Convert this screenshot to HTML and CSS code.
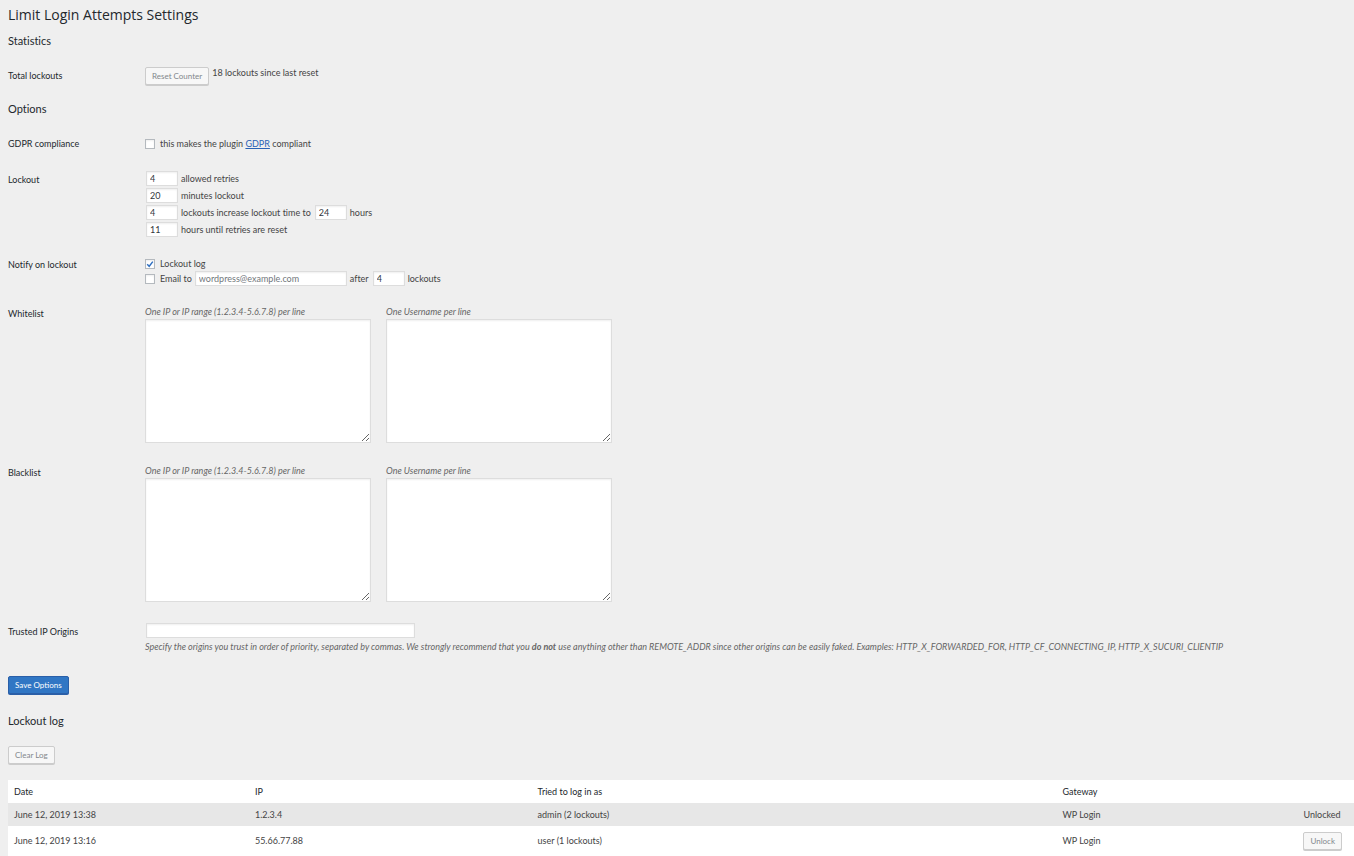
FILE: index.html
```html
<!DOCTYPE html>
<html lang="en">

<head>
    <meta charset="UTF-8">
    <meta name="viewport" content="width=device-width, initial-scale=1.0">
    <title>Limit Login Attempts Settings</title>
    <link rel="stylesheet" href="styles.css">
</head>

<body>
    <div class="wrap">
        <h1>Limit Login Attempts Settings</h1>
        <form>
            <h2>Statistics</h2>
            <div class="row">
                <div class="label">Total lockouts</div>
                <div class="field counter">
                    <button type="button" class="button">Reset Counter</button>
                    <span>18 lockouts since last reset</span>
                </div>
            </div>

            <h2>Options</h2>
            <div class="row">
                <div class="label">GDPR compliance</div>
                <div class="field line">
                    <input type="checkbox" id="gdpr">
                    <label for="gdpr">this makes the plugin <a href="#">GDPR</a> compliant</label>
                </div>
            </div>
            <div class="row">
                <div class="label">Lockout</div>
                <div class="field lines">
                    <div class="line">
                        <input type="text" class="num" id="retries" value="4">
                        <label for="retries">allowed retries</label>
                    </div>
                    <div class="line">
                        <input type="text" class="num" id="minutes" value="20">
                        <label for="minutes">minutes lockout</label>
                    </div>
                    <div class="line">
                        <input type="text" class="num" id="increase" value="4">
                        <label for="increase">lockouts increase lockout time to</label>
                        <input type="text" class="num" id="long" value="24">
                        <label for="long">hours</label>
                    </div>
                    <div class="line">
                        <input type="text" class="num" id="reset" value="11">
                        <label for="reset">hours until retries are reset</label>
                    </div>
                </div>
            </div>
            <div class="row">
                <div class="label">Notify on lockout</div>
                <div class="field">
                    <div class="line">
                        <input type="checkbox" id="log" checked>
                        <label for="log">Lockout log</label>
                    </div>
                    <div class="line">
                        <input type="checkbox" id="email">
                        <label for="email">Email to</label>
                        <input type="email" class="email" aria-label="Email address" placeholder="wordpress@example.com">
                        <label for="after">after</label>
                        <input type="text" class="num" id="after" value="4">
                        <label for="after">lockouts</label>
                    </div>
                </div>
            </div>
            <div class="row">
                <div class="label">Whitelist</div>
                <div class="field lists">
                    <div class="list">
                        <label class="description" for="white-ip">One IP or IP range (1.2.3.4-5.6.7.8) per line</label>
                        <textarea id="white-ip"></textarea>
                    </div>
                    <div class="list">
                        <label class="description" for="white-user">One Username per line</label>
                        <textarea id="white-user"></textarea>
                    </div>
                </div>
            </div>
            <div class="row">
                <div class="label">Blacklist</div>
                <div class="field lists">
                    <div class="list">
                        <label class="description" for="black-ip">One IP or IP range (1.2.3.4-5.6.7.8) per line</label>
                        <textarea id="black-ip"></textarea>
                    </div>
                    <div class="list">
                        <label class="description" for="black-user">One Username per line</label>
                        <textarea id="black-user"></textarea>
                    </div>
                </div>
            </div>
            <div class="row">
                <label class="label" for="origins">Trusted IP Origins</label>
                <div class="field">
                    <input type="text" class="origins" id="origins">
                    <p class="description">Specify the origins you trust in order of priority, separated by commas. We strongly recommend that you <b>do not</b> use anything other than REMOTE_ADDR since other origins can be easily faked. Examples: HTTP_X_FORWARDED_FOR, HTTP_CF_CONNECTING_IP, HTTP_X_SUCURI_CLIENTIP</p>
                </div>
            </div>
            <button type="button" class="button primary">Save Options</button>
        </form>

        <h2 class="log-title">Lockout log</h2>
        <button type="button" class="button clear">Clear Log</button>
        <table class="log">
            <thead>
                <tr>
                    <th class="date">Date</th>
                    <th class="ip">IP</th>
                    <th class="user">Tried to log in as</th>
                    <th class="gateway">Gateway</th>
                    <th></th>
                </tr>
            </thead>
            <tbody>
                <tr>
                    <td>June 12, 2019 13:38</td>
                    <td>1.2.3.4</td>
                    <td>admin (2 lockouts)</td>
                    <td>WP Login</td>
                    <td>Unlocked</td>
                </tr>
                <tr>
                    <td>June 12, 2019 13:16</td>
                    <td>55.66.77.88</td>
                    <td>user (1 lockouts)</td>
                    <td>WP Login</td>
                    <td><button type="button" class="button">Unlock</button></td>
                </tr>
            </tbody>
        </table>
    </div>
</body>

</html>
```
FILE: styles.css
```css
* {
    box-sizing: border-box;
}

body {
    margin: 0;
    background: #efefef;
    color: #444;
    font-family: Lato, "Open Sans", sans-serif;
    font-size: 9px;
    font-variant-ligatures: none;
    line-height: 16px;
}

.wrap {
    padding: 5px 0 0 8px;
}

h1 {
    margin: 0 0 8px;
    color: #23282d;
    font-family: "Open Sans", sans-serif;
    font-size: 14px;
    font-weight: 400;
    line-height: 20px;
}

h2 {
    margin: 6px 0 8px;
    color: #23282d;
    font-size: 11px;
    font-weight: 400;
    line-height: 16px;
}

a {
    color: #2a62b5;
}

.row {
    display: grid;
    grid-template-columns: 137px 1fr;
    padding: 10px 0 9px;
}

.label {
    padding-top: 1px;
    color: #23282d;
}

.counter {
    display: flex;
    gap: 3px;
    padding-bottom: 1px;
    line-height: 12px;
}

.line {
    display: flex;
    align-items: center;
    gap: 3px;
    line-height: 15px;
}

.lines {
    display: flex;
    flex-direction: column;
    gap: 2px;
}

input,
textarea {
    margin: 0;
    border: 1px solid #ddd;
    background: #fff;
    box-shadow: inset 0 1px 2px #0001;
    color: #32373c;
    font: inherit;
}

input {
    height: 15px;
    padding: 0 3px;
}

.num {
    width: 32px;
    margin-left: 1px;
}

.email {
    width: 152px;
}

.email::placeholder {
    color: #72777c;
}

input[type="checkbox"] {
    appearance: none;
    width: 10px;
    height: 10px;
    margin-right: 2px;
    padding: 0;
    border-color: #b4b9be;
}

input[type="checkbox"]:checked {
    background: #fff url("data:image/svg+xml,%3Csvg xmlns='http://www.w3.org/2000/svg' viewBox='0 0 8 8'%3E%3Cpath d='M1.2 4.2 3.2 6.3 6.8 1.6' fill='none' stroke='%232f6fc0' stroke-width='1.4'/%3E%3C/svg%3E");
}

.lists {
    display: flex;
    gap: 15px;
}

.list {
    width: 226px;
    padding-bottom: 2px;
}

.description {
    display: block;
    margin: 0;
    color: #666;
    font-style: italic;
    line-height: 14px;
}

textarea {
    display: block;
    width: 100%;
    height: 124px;
}

.origins {
    display: block;
    width: 269px;
    margin: 0 0 2px 1px;
}

.button {
    height: 18px;
    padding: 0 6px;
    border: 1px solid #ccc;
    border-radius: 2px;
    background: #f7f7f7;
    box-shadow: 0 1px 0 #ccc;
    color: #82878c;
    font-family: inherit;
    font-size: 8px;
    line-height: 16px;
}

.primary {
    display: block;
    margin: 13px 0 19px;
    border-color: #2a5fa8;
    background: #3076c4;
    box-shadow: 0 1px 0 #2a5fa8;
    color: #fff;
}

.log-title {
    margin-bottom: 17px;
}

.clear {
    display: block;
    margin-bottom: 16px;
}

.log {
    width: 100%;
    border-collapse: collapse;
    table-layout: fixed;
    background: #fff;
}

.log th,
.log td {
    height: 23px;
    padding: 3px 6px;
    font-weight: 400;
    text-align: left;
}

.log th {
    color: #23282d;
}

.log tbody tr:nth-child(odd) {
    background: #e7e7e7;
}

.log tbody tr:nth-child(even) td {
    height: 30px;
}

.log .button {
    display: block;
}

.date {
    width: 17.9%;
}

.ip {
    width: 21%;
}

.user {
    width: 39%;
}

.gateway {
    width: 17.9%;
}
```
